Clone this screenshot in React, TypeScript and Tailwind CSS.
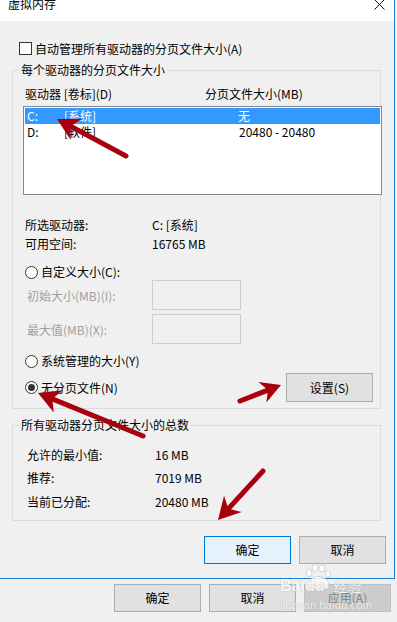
import React from 'react';

const font = "font-['Noto_Sans_CJK_SC','Liberation_Sans',sans-serif]";

const Radio: React.FC<{ checked?: boolean }> = ({ checked }) => (
  <span className="w-[13px] h-[13px] rounded-full border border-[#333333] bg-white flex items-center justify-center shrink-0">
    {checked && <span className="w-[7px] h-[7px] rounded-full bg-[#333333]" />}
  </span>
);

const Btn: React.FC<{ label: string; primary?: boolean; disabled?: boolean; className?: string }> = ({ label, primary, disabled, className }) => {
  let cls = 'border-[#adadad] bg-[#e1e1e1] text-black';
  if (primary) cls = 'border-[#0078d7] bg-[#e5f1fb] text-black';
  if (disabled) cls = 'border-[#bfbfbf] bg-[#cccccc] text-[#838383]';
  return (
    <div className={`w-[87px] h-[28px] border flex items-center justify-center ${cls} ${className ?? ''}`}>
      {label}
    </div>
  );
};

const Group: React.FC<{ title: string; className?: string; children: React.ReactNode }> = ({ title, className, children }) => (
  <div className={`relative ml-[12px] w-[369px] border border-[#dcdcdc] flex flex-col ${className ?? ''}`}>
    {/* legend sits on the top border */}
    <span className="absolute left-[6px] -top-[9px] px-[2px] bg-[#f0f0f0] leading-[16px]">{title}</span>
    {children}
  </div>
);

const Arrow: React.FC<{ tail: [number, number]; tip: [number, number]; head?: number; half?: number }> = ({ tail, tip, head = 22, half = 12 }) => {
  const dx = tip[0] - tail[0];
  const dy = tip[1] - tail[1];
  const len = Math.hypot(dx, dy);
  const ux = dx / len;
  const uy = dy / len;
  const bx = tip[0] - ux * head;
  const by = tip[1] - uy * head;
  const nx = tip[0] - ux * (head * 0.7);
  const ny = tip[1] - uy * (head * 0.7);
  const w1 = [bx - uy * half, by + ux * half];
  const w2 = [bx + uy * half, by - ux * half];
  return (
    <g>
      <line x1={tail[0]} y1={tail[1]} x2={nx} y2={ny} stroke="#a8000c" strokeWidth={5} strokeLinecap="round" />
      <polygon points={`${tip[0]},${tip[1]} ${w1[0]},${w1[1]} ${nx},${ny} ${w2[0]},${w2[1]}`} fill="#a8000c" />
    </g>
  );
};

const App: React.FC = () => {
  return (
    <div className={`relative w-[397px] h-[622px] overflow-hidden bg-[#f0f0f0] text-[12px] text-black ${font}`}>
      {/* dialog */}
      <div className="w-[395px] h-[579px] border-r border-b border-[#1a7fd4] flex flex-col">
        <div className="h-[21px] bg-white flex justify-between shrink-0">
          <span className="ml-[8px] -mt-[3px] text-[12px] leading-[14px]">虚拟内存</span>
          <svg width="11" height="11" viewBox="0 0 11 11" className="mr-[9px] -mt-[1px]">
            <path d="M0.5 0.5 L10.5 10.5 M10.5 0.5 L0.5 10.5" stroke="#111" strokeWidth="1" />
          </svg>
        </div>

        <div className="flex flex-col">
          <div className="mt-[21px] ml-[19px] h-[13px] flex items-center">
            <span className="w-[13px] h-[13px] border border-[#333333] bg-white shrink-0" />
            <span className="ml-[3px] leading-[16px]">自动管理所有驱动器的分页文件大小(A)</span>
          </div>

          <Group title="每个驱动器的分页文件大小" className="mt-[15px] h-[339px]">
            <div className="mt-[15px] pl-[12px] flex leading-[16px]">
              <span className="w-[180px]">驱动器 [卷标](D)</span>
              <span>分页文件大小(MB)</span>
            </div>
            <div className="mt-[4px] ml-[10px] w-[359px] h-[89px] border border-[#828790] bg-white p-[1px] flex flex-col">
              <div className="h-[16px] bg-[#3399ff] text-white flex items-center pl-[2px] leading-[16px]">
                <span className="w-[37px]">C:</span>
                <span className="w-[174px]">[系统]</span>
                <span>无</span>
              </div>
              <div className="h-[16px] flex items-center pl-[2px] leading-[16px]">
                <span className="w-[37px]">D:</span>
                <span className="w-[175px]">[软件]</span>
                <span>20480 - 20480</span>
              </div>
            </div>

            <div className="mt-[22px] pl-[12px] flex leading-[16px]">
              <span className="w-[127px]">所选驱动器:</span>
              <span>C:  [系统]</span>
            </div>
            <div className="mt-[3px] pl-[12px] flex leading-[16px]">
              <span className="w-[127px]">可用空间:</span>
              <span>16765 MB</span>
            </div>

            <div className="mt-[12px] pl-[12px] flex items-center h-[16px]">
              <Radio />
              <span className="ml-[3px]">自定义大小(C):</span>
            </div>
            <div className="pl-[14px] h-[30px] flex items-center text-[#a0a0a0]">
              <span className="w-[125px] pt-[2px]">初始大小(MB)(I):</span>
              <div className="w-[89px] h-[30px] border border-[#cccccc]" />
            </div>
            <div className="mt-[4px] pl-[14px] h-[30px] flex items-center text-[#a0a0a0]">
              <span className="w-[125px] pt-[2px]">最大值(MB)(X):</span>
              <div className="w-[89px] h-[30px] border border-[#cccccc]" />
            </div>

            <div className="mt-[9px] pl-[12px] flex items-center h-[16px]">
              <Radio />
              <span className="ml-[3px]">系统管理的大小(Y)</span>
            </div>
            <div className="mt-[4px] pl-[12px] pr-[7px] flex items-center h-[29px]">
              <Radio checked />
              <span className="ml-[3px]">无分页文件(N)</span>
              <Btn label="设置(S)" className="ml-auto h-[29px]" />
            </div>
          </Group>

          <Group title="所有驱动器分页文件大小的总数" className="mt-[16px] h-[96px]">
            <div className="mt-[21px] pl-[14px] flex leading-[16px]">
              <span className="w-[128px]">允许的最小值:</span>
              <span>16 MB</span>
            </div>
            <div className="mt-[7px] pl-[14px] flex leading-[16px]">
              <span className="w-[128px]">推荐:</span>
              <span>7019 MB</span>
            </div>
            <div className="mt-[8px] pl-[14px] flex leading-[16px]">
              <span className="w-[128px]">当前已分配:</span>
              <span>20480 MB</span>
            </div>
          </Group>

          <div className="mt-[15px] pr-[8px] flex justify-end gap-[8px]">
            <Btn label="确定" primary />
            <Btn label="取消" />
          </div>
        </div>
      </div>

      {/* window behind the dialog */}
      <div className="mt-[5px] pr-[6px] flex justify-end gap-[8px]">
        <Btn label="确定" />
        <Btn label="取消" />
        <Btn label="应用(A)" disabled />
      </div>

      {/* watermark */}
      <div className="absolute left-[280px] top-[566px] flex flex-col items-start text-white opacity-80 pointer-events-none [text-shadow:0_0_1px_#8a8a8a]">
        <div className="flex items-end h-[28px] font-['Liberation_Sans',sans-serif] font-bold">
          <span className="text-[16px] leading-[16px]">Bai</span>
          <span className="relative text-[16px] leading-[16px]">
            <svg width="28" height="26" viewBox="0 0 28 26" className="absolute -left-[1px] -top-[14px]">
              <g fill="#ffffff" stroke="#b0b0b0" strokeWidth="0.6">
                <ellipse cx="5" cy="9" rx="3" ry="3.6" />
                <ellipse cx="11" cy="4" rx="3" ry="3.6" />
                <ellipse cx="18" cy="4.5" rx="3" ry="3.6" />
                <ellipse cx="24" cy="10" rx="2.6" ry="3.2" />
                <path d="M3 22 C3 15 9 12.5 14 12.5 C19 12.5 25 15 25 22 C25 26 19 26 14 25 C9 26 3 26 3 22 Z" />
              </g>
            </svg>
            <span className="relative">du</span>
          </span>
          <span className={`text-[14px] leading-[16px] ml-[9px] font-normal ${font}`}>经验</span>
        </div>
        <span className="mt-[5px] text-[11px] leading-[12px] font-['Liberation_Sans',sans-serif] tracking-[0.2px]">jingyan.baidu.com</span>
      </div>

      {/* annotation arrows */}
      <svg className="absolute left-0 top-0 pointer-events-none" width="397" height="622">
        <Arrow tail={[126, 156]} tip={[57, 119]} />
        <Arrow tail={[143, 436]} tip={[38, 393]} />
        <Arrow tail={[240, 401]} tip={[281, 385]} head={20} half={11} />
        <Arrow tail={[263, 471]} tip={[218, 520]} />
      </svg>
    </div>
  );
};

export default App;
